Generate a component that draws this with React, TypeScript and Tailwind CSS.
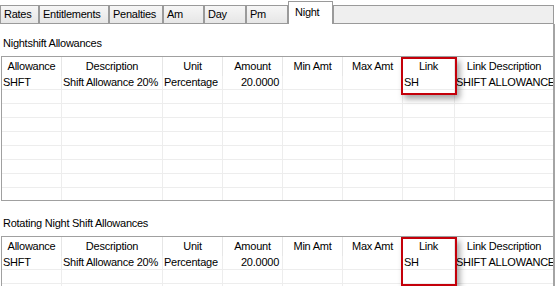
import React from "react";

const cols = [
  { name: "Allowance", w: "w-[60px]" },
  { name: "Description", w: "w-[101px]" },
  { name: "Unit", w: "w-[60px]" },
  { name: "Amount", w: "w-[60px]" },
  { name: "Min Amt", w: "w-[60px]" },
  { name: "Max Amt", w: "w-[60px]" },
  { name: "Link", w: "w-[52px]" },
  { name: "Link Description", w: "w-[98px]" },
];

const dataRow = ["SHFT", "Shift Allowance 20%", "Percentage", "20.0000", "", "", "SH", "SHIFT ALLOWANCE"];

function Grid({ height, rows, boxHeight }: { height: string; rows: number; boxHeight: string }) {
  return (
    <div className={`relative ml-[1px] w-[552px] ${height} border-l border-t border-b border-[#a0a0a0] bg-white`}>
      <div className="h-full overflow-hidden">
        <div className="flex h-[19px]">
          {cols.map((c, i) => (
            <div
              key={c.name}
              className={`${c.w} shrink-0 flex items-center justify-center ${i < cols.length - 1 ? "border-r border-[#e6e6e6]" : ""} whitespace-nowrap overflow-hidden`}
            >
              {c.name}
            </div>
          ))}
        </div>
        {Array.from({ length: rows }).map((_, r) => (
          <div key={r} className="flex h-[14px] border-b border-[#ededed]">
            {cols.map((c, i) => {
              const v = r === 0 ? dataRow[i] : "";
              return (
                <div
                  key={c.name}
                  className={`${c.w} shrink-0 flex items-center ${i === 3 ? "justify-end pr-[3px]" : "pl-[1px]"} ${i < cols.length - 1 ? "border-r border-[#ededed]" : ""} whitespace-nowrap overflow-hidden leading-none`}
                >
                  {v}
                </div>
              );
            })}
          </div>
        ))}
      </div>
      <div
        className={`absolute left-[399px] top-0 w-[56px] ${boxHeight} border-2 border-[#c4000a] shadow-[3px_4px_6px_rgba(0,0,0,0.35)]`}
      />
    </div>
  );
}

const tabs = [
  { name: "Rates", w: "w-[39px]" },
  { name: "Entitlements", w: "w-[70px]" },
  { name: "Penalties", w: "w-[54px]" },
  { name: "Am", w: "w-[41px]" },
  { name: "Day", w: "w-[42px]" },
  { name: "Pm", w: "w-[42px]" },
];

export default function App() {
  return (
    <div
      className="w-[559px] h-[286px] bg-white overflow-hidden text-[11px] tracking-[-0.25px] text-black"
      style={{ fontFamily: '"Liberation Sans", Arial, sans-serif' }}
    >
      <div className="flex items-end h-[24px]">
        {tabs.map((t) => (
          <div
            key={t.name}
            className={`${t.w} h-[19px] shrink-0 border border-[#9a9a9a] bg-gradient-to-b from-[#f6f6f6] to-[#e6e6e6] flex items-center pl-[3px] whitespace-nowrap`}
          >
            {t.name}
          </div>
        ))}
        <div className="w-[45px] h-[23px] shrink-0 border-l border-r border-t border-[#9a9a9a] bg-white flex items-start pt-[2px] pl-[6px]">
          Night
        </div>
        <div className="w-[221px] h-[19px] shrink-0 border border-[#9a9a9a] bg-[#efefef]" />
      </div>
      <div className="w-[555px] h-[262px] border-r-2 border-[#a4a4a4]">
        <div className="pt-[13px] pl-[3px] h-[26px] leading-[13px]">Nightshift Allowances</div>
        <div className="mt-[6px]">
          <Grid height="h-[145px]" rows={9} boxHeight="h-[38px]" />
        </div>
        <div className="pt-[16px] pl-[3px] h-[29px] leading-[13px]">Rotating Night Shift Allowances</div>
        <div className="mt-[6px]">
          <Grid height="h-[60px]" rows={3} boxHeight="h-[49px]" />
        </div>
      </div>
    </div>
  );
}
